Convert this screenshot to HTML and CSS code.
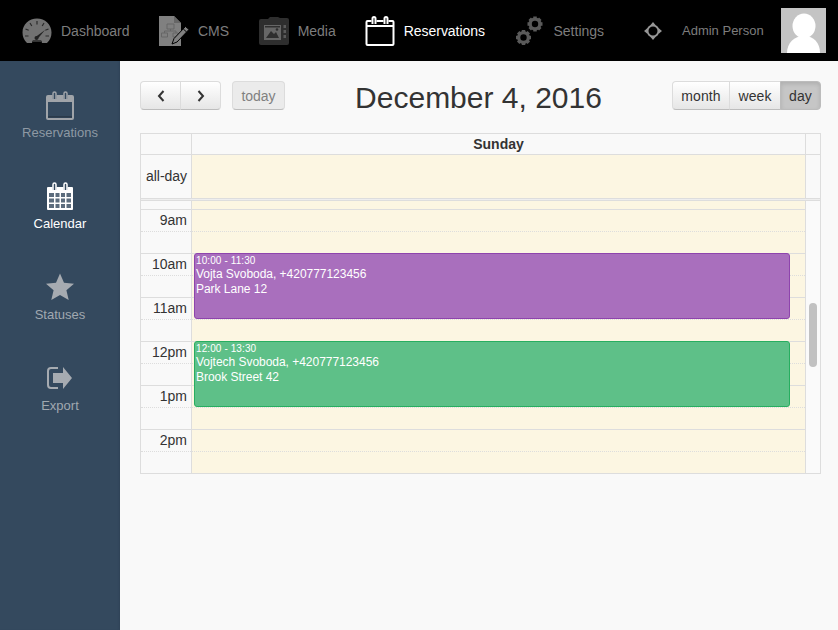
FILE: index.html
```html
<!DOCTYPE html>
<html lang="en">
<head>
<meta charset="utf-8">
<title>Reservations</title>
<link rel="stylesheet" href="styles.css">
</head>
<body>
<header class="topbar">
  <nav class="topnav">
    <a class="topnav-item">
      <svg class="topicon" viewBox="0 0 30 30"><path fill="#727272" d="M5 27C2 24 .5 20.500.5 16.500.5 8.500 7 2.500 15 2.500s14.500 6 14.500 14c0 4-1.500 7.500-4.500 10.500h-5l-.7-2.500h-8.600L10 27z"/><path stroke="#2a2a2a" stroke-width="1.200" fill="none" d="M15 5v3.500M8 7l1.800 3M22 7l-1.800 3M3.500 13l3.200 1.300M26.500 13l-3.200 1.300M3 20h3.500M27 20h-3.500"/><path fill="#222" d="M13.500 21l9.500-7-7.500 9z"/><circle cx="14.500" cy="22" r="2" fill="#222"/><path stroke="#333" stroke-width="1" d="M11 25.500h8"/></svg>
      <span>Dashboard</span>
    </a>
    <a class="topnav-item">
      <svg class="topicon" viewBox="0 0 30 30"><path fill="#808080" d="M0 0h15l7 7v23H0z"/><path fill="#666" d="M15 0l7 7h-7z"/><path fill="none" stroke="#666" stroke-width="1" d="M8 8h7v5H8zM2.500 17h6v4h-6zM14 17h5v4h-5zM11.500 13v2M5.500 17v-2h11.500v2"/><path fill="#808080" stroke="#000" stroke-width="1" d="M26.500 10.500l3.500 3-12 12.500-5 2 2-5.500z"/><path stroke="#000" stroke-width="1" d="M24.300 13l3.300 3"/></svg>
      <span>CMS</span>
    </a>
    <a class="topnav-item">
      <svg class="topicon" viewBox="0 0 30 30"><path fill="#2e2e2e" d="M2 3h7l2-2h8l2 1h7q2 0 2 2v23q0 2-2 2H2q-2 0-2-2V5q0-2 2-2z"/><path fill="#666" d="M5 9h17v15H5z"/><path fill="#2e2e2e" d="M7 22l5-7 3 3 2-2 3 6z"/><path fill="#2e2e2e" d="M6 10h15v1.500H6z"/><circle cx="18" cy="13.500" r="1.300" fill="#2e2e2e"/><path fill="#5a5a5a" d="M24.500 9h2.500v3h-2.500zM24.500 14h2.500v3h-2.500zM24.500 19h2.500v3h-2.500z"/></svg>
      <span>Media</span>
    </a>
    <a class="topnav-item is-active">
      <svg class="topicon" viewBox="-0.500 0 30 30"><path fill="none" stroke="#fff" stroke-width="2" stroke-linejoin="round" d="M2 5h25q1 0 1 1v22q0 1-1 1H2q-1 0-1-1V6q0-1 1-1z"/><path fill="#000" d="M6 3h5v5H6zM18 3h5v5h-5z"/><path fill="none" stroke="#fff" stroke-width="2" d="M7 8V2.500a1.500 1.500 0 0 1 3 0V8M19 8V2.500a1.500 1.500 0 0 1 3 0V8M1 10h27"/></svg>
      <span>Reservations</span>
    </a>
    <a class="topnav-item">
      <svg class="topicon" viewBox="0 0 30 30"><g fill="#5a5a5a" stroke="#5a5a5a"><circle cx="20" cy="8" r="6.500" stroke="none"/><path stroke-width="3.500" d="M20 .5v15M12.500 8h15M14.700 2.700l10.600 10.600M25.300 2.700L14.700 13.300"/><circle cx="8.500" cy="21.500" r="6.500" stroke="none"/><path stroke-width="3.500" d="M8.500 14v15M1 21.500h15M3.200 16.200l10.600 10.600M13.800 16.200L3.200 26.800"/></g><circle cx="20" cy="8" r="3.200" fill="#000"/><circle cx="8.500" cy="21.500" r="3.200" fill="#000"/></svg>
      <span>Settings</span>
    </a>
  </nav>
  <div class="user">
    <svg class="user-target" viewBox="0 0 18 18"><circle cx="9" cy="9" r="5.500" fill="none" stroke="#969696" stroke-width="2"/><path fill="#969696" d="M6.500 3L9 0l2.500 3zM6.500 15L9 18l2.500-3zM3 6.500L0 9l3 2.500zM15 6.500L18 9l-3 2.500z"/></svg>
    <span class="user-name">Admin Person</span>
    <svg class="avatar" viewBox="0 0 45 45"><rect width="45" height="45" fill="#c4c4c4"/><ellipse cx="23" cy="18" rx="11.500" ry="12.500" fill="#fff"/><path fill="#fff" d="M6 45c0-10 7-17 17-17s16 7 16 17z"/></svg>
  </div>
</header>

<div class="shell">
  <aside class="sidebar">
    <a class="side-item">
      <svg class="side-icon" viewBox="0 0 28 30"><path fill="none" stroke="#a0a4a9" stroke-width="2" d="M2 6h24q1 0 1 1v21q0 1-1 1H2q-1 0-1-1V7q0-1 1-1z"/><path fill="#a0a4a9" d="M1 6h26v6H1z"/><path fill="#34495e" d="M6.500 3h4v6h-4zM17.500 3h4v6h-4z"/><path fill="none" stroke="#a0a4a9" stroke-width="1.500" d="M7 9V3.500a1.500 1.500 0 0 1 3 0V9M18 9V3.500a1.500 1.500 0 0 1 3 0V9"/><path fill="#2a3a4a" d="M2 26h24v1.500H2z"/></svg>
      <span>Reservations</span>
    </a>
    <a class="side-item is-active">
      <svg class="side-icon" viewBox="0 0 28 30"><path fill="#fff" d="M1 7q0-1 1-1h24q1 0 1 1v21q0 1-1 1H2q-1 0-1-1z"/><path fill="#34495e" d="M6.500 2h4v7h-4zM17.500 2h4v7h-4z"/><path fill="none" stroke="#fff" stroke-width="1.500" d="M7 9V3.500a1.500 1.500 0 0 1 3 0V9M18 9V3.500a1.500 1.500 0 0 1 3 0V9"/><path fill="#5c6c7d" d="M3 12h5v4H3zM9.500 12h4v4h-4zM15 12h4v4h-4zM20.500 12H25v4h-4.500zM3 17.500h5v4H3zM9.500 17.500h4v4h-4zM15 17.500h4v4h-4zM20.500 17.500H25v4h-4.500zM3 23h5v4H3zM9.500 23h4v4h-4zM15 23h4v4h-4zM20.500 23H25v4h-4.500z"/></svg>
      <span>Calendar</span>
    </a>
    <a class="side-item is-dim">
      <svg class="side-icon" viewBox="0 0 28 30"><path fill="#a6abb1" d="M14 1.500l4 9.300 10 .9-7.600 6.600 2.300 9.700L14 23l-8.700 5 2.300-9.700L0 11.700l10-.9z"/></svg>
      <span>Statuses</span>
    </a>
    <a class="side-item is-dim">
      <svg class="side-icon" viewBox="0 0 28 30"><path fill="none" stroke="#a6abb1" stroke-width="2" d="M12 5H5q-3 0-3 3v14q0 3 3 3h7"/><path fill="#a6abb1" d="M7 10h10V4l9 11-9 11v-6H7z"/></svg>
      <span>Export</span>
    </a>
  </aside>

  <main class="content">
    <div class="toolbar">
      <div class="toolbar-left">
        <div class="btn-group">
          <button class="btn btn-arrow"><svg viewBox="0 0 10 12" class="chev"><path d="M7.500 1L3 6l4.500 5" fill="none" stroke="#333" stroke-width="2"/></svg></button>
          <button class="btn btn-arrow"><svg viewBox="0 0 10 12" class="chev"><path d="M2.500 1L7 6l-4.500 5" fill="none" stroke="#333" stroke-width="2"/></svg></button>
        </div>
        <button class="btn btn-today">today</button>
      </div>
      <h1 class="title">December 4, 2016</h1>
      <div class="btn-group">
        <button class="btn btn-view">month</button>
        <button class="btn btn-view">week</button>
        <button class="btn btn-view is-on">day</button>
      </div>
    </div>

    <div class="cal">
      <div class="cal-row cal-head">
        <div class="cal-axis"></div>
        <div class="cal-day">Sunday</div>
        <div class="cal-gutter"></div>
      </div>
      <div class="cal-row cal-allday">
        <div class="cal-axis">all-day</div>
        <div class="cal-day is-today"></div>
        <div class="cal-gutter"></div>
      </div>
      <div class="cal-divider"></div>
      <div class="cal-row cal-grid">
        <div class="cal-axis-col">
          <div class="slot slot-cut"></div>
          <div class="slot">9am</div><div class="slot slot-half"></div>
          <div class="slot">10am</div><div class="slot slot-half"></div>
          <div class="slot">11am</div><div class="slot slot-half"></div>
          <div class="slot">12pm</div><div class="slot slot-half"></div>
          <div class="slot">1pm</div><div class="slot slot-half"></div>
          <div class="slot">2pm</div><div class="slot slot-half"></div>
        </div>
        <div class="cal-day-col is-today">
          <div class="slot slot-cut"></div>
          <div class="slot"></div><div class="slot slot-half"></div>
          <div class="slot"></div><div class="slot slot-half"></div>
          <div class="slot"></div><div class="slot slot-half"></div>
          <div class="slot"></div><div class="slot slot-half"></div>
          <div class="slot"></div><div class="slot slot-half"></div>
          <div class="slot"></div><div class="slot slot-half"></div>
          <div class="event event-purple">
            <div class="event-time">10:00 - 11:30</div>
            <div>Vojta Svoboda, +420777123456</div>
            <div>Park Lane 12</div>
          </div>
          <div class="event event-green">
            <div class="event-time">12:00 - 13:30</div>
            <div>Vojtech Svoboda, +420777123456</div>
            <div>Brook Street 42</div>
          </div>
        </div>
        <div class="cal-scroll"><div class="thumb"></div></div>
      </div>
    </div>
  </main>
</div>
</body>
</html>
```

FILE: styles.css
```css
* { box-sizing: border-box; }
html, body { margin: 0; height: 100%; overflow: hidden; }
body {
  width: 838px;
  height: 630px;
  display: flex;
  flex-direction: column;
  background: #f9f9f9;
  color: #333;
  font-family: "Liberation Sans", Arial, sans-serif;
  font-size: 14px;
}

.topbar {
  height: 61px;
  flex: none;
  background: #000;
  display: flex;
  align-items: center;
  justify-content: space-between;
  padding: 0 12px 0 22px;
}
.topnav { display: flex; gap: 29.5px; }
.topnav-item {
  display: flex;
  align-items: center;
  gap: 9px;
  color: #7d7d7d;
  font-size: 14px;
}
.topnav-item.is-active { color: #fff; gap: 8.5px; }
.topnav-item.is-active span { letter-spacing: -0.04px; }
.topicon { width: 30px; height: 30px; display: block; }
.user { display: flex; align-items: center; }
.user-target { width: 18px; height: 18px; margin-right: 20px; }
.user-name { font-size: 13px; color: #7d7d7d; margin-right: 18px; width: 81px; white-space: nowrap; }
.avatar { width: 45px; height: 45px; display: block; }

.shell { flex: 1; display: flex; min-height: 0; }
.sidebar {
  width: 120px;
  flex: none;
  background: #34495e;
  box-shadow: inset -2px 0 2px -1px #304358;
  padding-top: 29px;
  display: flex;
  flex-direction: column;
  gap: 31px;
}
.side-item {
  height: 60px;
  display: flex;
  flex-direction: column;
  align-items: center;
  color: #8e99a4;
  font-size: 13px;
  line-height: 15px;
}
.side-item.is-active { color: #fff; }
.side-item.is-dim { color: #a0a8b0; }
.side-icon { width: 28px; height: 30px; margin-bottom: 5px; display: block; }

.content { flex: 1; padding: 20px 17px 0 20px; min-width: 0; }
.toolbar {
  display: flex;
  align-items: flex-start;
  justify-content: space-between;
  height: 52px;
}
.toolbar-left { display: flex; gap: 11px; }
.title {
  margin: 0;
  font-size: 30px;
  font-weight: 400;
  line-height: 34px;
  color: #333;
}
.btn-group { display: flex; }
.btn {
  height: 29px;
  padding: 0;
  margin: 0;
  border: 1px solid #dcdcdc;
  border-bottom-color: #bdbdbd;
  background: linear-gradient(#ffffff, #e6e6e6);
  color: #333;
  font: 14px "Liberation Sans", Arial, sans-serif;
  display: flex;
  align-items: center;
  justify-content: center;
}
.btn-group .btn:first-child { border-radius: 4px 0 0 4px; }
.btn-group .btn:last-child { border-radius: 0 4px 4px 0; }
.btn-group .btn + .btn { margin-left: -1px; }
.btn-arrow { width: 41px; }
.chev { width: 10px; height: 12px; display: block; }
.btn-today {
  width: 53px;
  border-radius: 4px;
  background: #ebebeb;
  color: #808080;
}
.btn-view { letter-spacing: 0.1px; }
.btn-view:nth-child(1) { width: 58px; }
.btn-view:nth-child(2) { width: 52px; }
.btn-view:nth-child(3) { width: 41px; }
.btn-view.is-on {
  background: #c6c6c6;
  border-color: #bcbcbc;
  box-shadow: inset 0 2px 4px rgba(0,0,0,.12);
}

.cal {
  width: 681px;
  height: 341px;
  border: 1px solid #ddd;
  background: #f9f9f9;
}
.cal-row { display: flex; }
.cal-axis, .cal-axis-col { width: 51px; flex: none; border-right: 1px solid #ddd; }
.cal-day, .cal-day-col { width: 614px; flex: none; border-right: 1px solid #ddd; }
.cal-gutter, .cal-scroll { flex: 1; }
.cal-head {
  height: 21px;
  border-bottom: 1px solid #ddd;
}
.cal-head .cal-day {
  text-align: center;
  font-weight: 700;
  line-height: 20px;
}
.cal-allday { height: 43px; }
.cal-allday .cal-axis {
  line-height: 43px;
  text-align: center;
  padding-left: 1px;
}
.is-today { background: #fcf6e2; }
.cal-divider {
  height: 3px;
  border-top: 1px solid #ddd;
  border-bottom: 1px solid #ddd;
  background: #eee;
}
.cal-grid { height: 272px; overflow: hidden; }
.cal-day-col { position: relative; }
.slot {
  height: 22px;
  border-bottom: 1px dotted #ddd;
  text-align: right;
  padding-right: 4px;
  line-height: 20px;
}
.slot-half { border-bottom: 1px solid #ddd; }
.slot-cut { height: 9px; border-bottom: 1px solid #ddd; }
.event {
  position: absolute;
  left: 2px;
  width: 596px;
  height: 66px;
  border-radius: 3px;
  border: 1px solid;
  color: #fff;
  font-size: 12px;
  line-height: 15px;
  padding: 1px 1px 0;
  letter-spacing: -0.03px;
}
.event-time { font-size: 10px; line-height: 12px; letter-spacing: 0.1px; }
.event-purple { top: 52px; background: #a96fbd; border-color: #8e44ad; }
.event-green { top: 140px; background: #5ec088; border-color: #27ae60; }
.cal-scroll { position: relative; background: #fafafa; }
.thumb {
  position: absolute;
  top: 102px;
  left: 3px;
  width: 8px;
  height: 64px;
  border-radius: 4px;
  background: #c1c1c1;
}
```
